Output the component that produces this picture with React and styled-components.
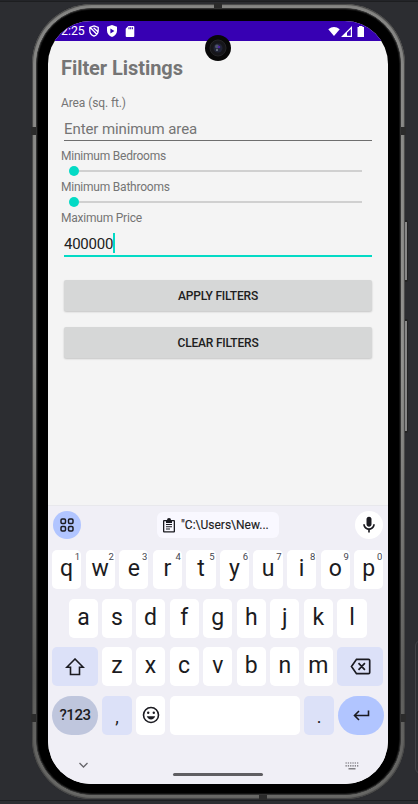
import React from "react";
import styled, { createGlobalStyle, css } from "styled-components";

const GlobalStyle = createGlobalStyle`
  * { box-sizing: border-box; }
  html, body { margin: 0; background: #2c2d31; }
  body { font-family: Roboto, "Noto Sans", sans-serif; overflow: hidden; }
`;

const Desktop = styled.main`
  position: relative;
  width: 418px;
  height: 804px;
  padding: 3px 0 0 32px;
  background: #2c2d31;
  border-top: 1px solid #232428;
  overflow: hidden;
`;

const DeskLine = styled.div`
  position: absolute;
  left: 0;
  right: 0;
  top: 799px;
  height: 1px;
  background: #1d1e20;
`;

const TopLine = styled(DeskLine)`
  top: 0;
`;

const SidePanel = styled.div`
  position: absolute;
  left: 415px;
  top: 639px;
  width: 20px;
  height: 134px;
  border: 1px solid #414246;
  border-radius: 6px;
`;

const SideButton = styled.div`
  position: absolute;
  left: 404px;
  top: ${(p) => p.$top}px;
  width: 4px;
  height: ${(p) => p.$height}px;
  border-radius: 2px;
  border: 1px solid #222;
  border-width: 2px 1px 2px 1px;
  background: #888;
`;

const Phone = styled.div`
  position: relative;
  width: 373px;
  height: 795px;
  border-radius: 60px;
  background: #222;
`;

const Rim = styled.div`
  height: 100%;
  padding: 4px;
  border-radius: 60px;
  background: linear-gradient(180deg, #858583 0%, #92928f 45%, #5e5e5c 85%, #686866 100%);
  box-shadow: inset 0 0 1px 1px #444;
`;

const Bezel = styled.div`
  height: 100%;
  padding: 12px 11px 10px 11px;
  border: 1px solid #333;
  border-radius: 56px;
  background: #000;
  box-shadow: inset 0 0 0 1px #111;
`;

const Antenna = styled.i`
  position: absolute;
  left: ${(p) => p.$x}px;
  top: ${(p) => p.$y}px;
  width: ${(p) => (p.$flat ? 8 : 5)}px;
  height: ${(p) => (p.$flat ? 5 : 8)}px;
  background: #2b2b2b;
`;

const Screen = styled.div`
  width: 340px;
  height: 763px;
  border-radius: 43px;
  background: #f4f4f4;
  overflow: hidden;
  display: flex;
  flex-direction: column;
`;

const StatusBar = styled.header`
  height: 20px;
  flex: none;
  padding: 0 23px 0 13px;
  background: #3700b3;
  color: #fff;
  display: flex;
  align-items: center;
  svg { display: block; }
`;

const Clock = styled.span`
  width: 28px;
  font-size: 12.3px;
  line-height: 20px;
`;

const StatusIcons = styled.div`
  display: flex;
  align-items: center;
  gap: ${(p) => p.$gap}px;
  margin-left: ${(p) => (p.$end ? "auto" : 0)};
`;

const Camera = styled.svg`
  position: absolute;
  left: 173px;
  top: 31px;
`;

const Form = styled.section`
  height: 464px;
  flex: none;
  padding: 13px 13px 0;
  display: flex;
  flex-direction: column;
`;

const Title = styled.h1`
  margin: 0 0 13px;
  font-size: 20px;
  line-height: 28px;
  font-weight: 700;
  letter-spacing: -0.06px;
  color: #757575;
`;

const Label = styled.label`
  height: 16px;
  font-size: 12px;
  line-height: 16px;
  color: #757575;
  letter-spacing: ${(p) => (p.$loose ? -0.1 : -0.22)}px;
`;

const Field = styled.div`
  height: ${(p) => (p.$active ? 31 : 30)}px;
  margin: 0 3px ${(p) => (p.$active ? 23 : 7)}px;
  padding-top: ${(p) => (p.$active ? 7 : 6)}px;
  border-bottom: ${(p) => (p.$active ? "2px solid #03dac5" : "1px solid #6e6e6e")};
  font-size: 15px;
  line-height: 22px;
  letter-spacing: ${(p) => (p.$active ? -0.25 : -0.09)}px;
  color: ${(p) => (p.$active ? "#202020" : "#757575")};
  display: flex;
  align-items: center;
`;

const Caret = styled.i`
  width: 2px;
  height: 20px;
  background: #03dac5;
  margin-top: -3px;
`;

const Slider = styled.div`
  height: 15px;
  padding: 0 13px 2px 8px;
  display: flex;
  align-items: center;
`;

const Thumb = styled.i`
  width: 10px;
  height: 10px;
  border-radius: 50%;
  background: #03dac5;
`;

const Track = styled.i`
  flex: 1;
  height: 2px;
  background: #d0d0d0;
`;

const FormButton = styled.button`
  height: 31px;
  flex: none;
  margin: 0 3px 16px;
  padding: ${(p) => (p.$low ? 1 : 0)}px 0 0;
  border: 0;
  border-radius: 2px;
  background: #d6d7d7;
  box-shadow: 0 1px 2px rgba(0, 0, 0, 0.2);
  color: #202020;
  font: 500 12px/30px Roboto, sans-serif;
  letter-spacing: -0.2px;
`;

const Keyboard = styled.section`
  height: 279px;
  flex: none;
  padding: 5px 4px 0;
  background: #f0eff6;
  border-top: 1px solid #e8e8ec;
  color: #1b1b21;
  display: flex;
  flex-direction: column;
  svg { display: block; }
`;

const Suggestions = styled.div`
  height: 28px;
  margin-bottom: 11px;
  display: flex;
  align-items: center;
  justify-content: space-between;
`;

const RoundButton = styled.button`
  width: 28px;
  height: 28px;
  padding: 0;
  border: 0;
  border-radius: 50%;
  margin: 0 1px;
  background: ${(p) => (p.$blue ? "#b1c5ff" : "#fff")};
  color: #1b1b21;
  display: grid;
  place-items: center;
`;

const Clip = styled.div`
  width: 122px;
  height: 26px;
  border-radius: 6px;
  background: #f9f8ff;
  padding-left: 5px;
  display: flex;
  align-items: center;
  gap: 5px;
  font-size: 12px;
  letter-spacing: 0;
  -webkit-text-stroke: 0.15px #1b1b21;
`;

const KeyRow = styled.div`
  height: 39px;
  margin-bottom: 9.6px;
  padding: 0 ${(p) => p.$inset || 0}px;
  display: flex;
  gap: 4.4px;
`;

const keyTone = {
  plain: "#fff",
  soft: "#dce1f8",
  mode: "#bfc6dd",
  enter: "#b1c5ff",
};

const Key = styled.button`
  position: relative;
  flex: ${(p) => (p.$wide ? "0 0 46px" : p.$grow ? "1 1 0" : "0 0 29.2px")};
  height: 39px;
  padding: 0 0 1px;
  border: 0;
  border-radius: ${(p) => (p.$round ? 20 : 5)}px;
  background: ${(p) => keyTone[p.$tone || "plain"]};
  color: #1b1b21;
  font: 400 23px/36px Roboto, sans-serif;
  display: flex;
  align-items: center;
  justify-content: center;
  ${(p) => p.$icon && css`padding: 0;`}
  ${(p) => p.$mode && css`font-size: 15px; font-weight: 500; letter-spacing: -0.5px; padding: 0;`}
  ${(p) => p.$punct && css`font-size: 18px; padding-top: 4px;`}
`;

const Hint = styled.sup`
  position: absolute;
  right: 1px;
  top: 2px;
  font-size: 9.5px;
  line-height: 10px;
  color: #45464f;
`;

const NavBar = styled.footer`
  flex: 1;
  padding: 18px 25px 0 27px;
  display: grid;
  grid-template-columns: 30px 1fr 30px;
  align-items: start;
`;

const HomePill = styled.i`
  justify-self: center;
  width: 90px;
  height: 3px;
  margin-top: 11px;
  margin-right: 2px;
  border-radius: 2px;
  background: #5f5e62;
`;

const NavIcon = styled.span`
  justify-self: ${(p) => p.$side};
  color: #66656a;
`;

function Glyph({ w = 18, h = w, box = "0 0 24 24", stroke, children }) {
  return (
    <svg
      width={w}
      height={h}
      viewBox={box}
      fill={stroke ? "none" : "currentColor"}
      stroke={stroke ? "currentColor" : "none"}
      strokeWidth={stroke}
    >
      {children}
    </svg>
  );
}

function Letters({ text, hints }) {
  return [...text].map((ch, i) => (
    <Key key={ch}>
      {ch}
      {hints && <Hint>{hints[i]}</Hint>}
    </Key>
  ));
}

function Status() {
  return (
    <StatusBar>
      <Clock>2:25</Clock>
      <StatusIcons $gap={8}>
        <Glyph w={10} h={12} box="0 0 10 12" stroke={1.3}>
          <path d="M5 .9 9.2 2.4v3.3c0 2.6-1.7 4.400-4.200 5.400C2.500 10.100.8 8.300.8 5.700V2.400zM1.300 2.500l6.500 6.800M4.600 2.800l4 3.600" />
        </Glyph>
        <Glyph w={10} h={12} box="0 0 10 12">
          <path fillRule="evenodd" d="M5 0 10 1.800v4C10 8.700 8 10.900 5 12 2 10.900 0 8.700 0 5.800v-4zM3.400 3.500v5L7.400 6z" />
        </Glyph>
        <Glyph w={10} h={11} box="0 0 10 11">
          <path fillRule="evenodd" d="M3.300 0H8.300Q9.300 0 9.300 1V10Q9.300 11 8.300 11H1.700Q.700 11 .700 10V2.700zM3.500 1.300v2h1v-2zM5.200 1.300v2h1v-2zM6.900 1.300v2h1v-2z" />
        </Glyph>
      </StatusIcons>
      <StatusIcons $gap={1} $end>
        <Glyph w={12} h={11} box="0 0 13 11">
          <path d="M.300 3Q6.500-2 12.700 3L6.500 10.500z" />
        </Glyph>
        <Glyph w={11} h={11} box="0 0 11 11">
          <path fillRule="evenodd" d="M0 11 11 0v11zM6 6.700V9.800h3.800V3z" />
        </Glyph>
        <Glyph w={12} h={11} box="1 0 12 11">
          <path d="M5.500 1H7V0h3.500v1H12v10H5.500z" />
        </Glyph>
      </StatusIcons>
    </StatusBar>
  );
}

export default function App() {
  return (
    <Desktop>
      <GlobalStyle />
      <TopLine />
      <DeskLine />
      <SidePanel />
      <SideButton $top={219} $height={62} />
      <SideButton $top={318} $height={114} />
      <Phone>
        <Rim>
          <Bezel>
            <Screen>
              <Status />
              <Form>
                <Title>Filter Listings</Title>
                <Label $loose>Area (sq. ft.)</Label>
                <Field>Enter minimum area</Field>
                <Label>Minimum Bedrooms</Label>
                <Slider><Thumb /><Track /></Slider>
                <Label>Minimum Bathrooms</Label>
                <Slider><Thumb /><Track /></Slider>
                <Label>Maximum Price</Label>
                <Field $active>400000<Caret /></Field>
                <FormButton $low>APPLY FILTERS</FormButton>
                <FormButton>CLEAR FILTERS</FormButton>
              </Form>
              <Keyboard>
                <Suggestions>
                  <RoundButton $blue>
                    <Glyph w={14} box="0 0 14 14" stroke={1.5}>
                      <rect x="1" y="1" width="4.500" height="4.500" rx="1.200" />
                      <rect x="8.500" y="1" width="4.500" height="4.500" rx="1.200" />
                      <rect x="1" y="8.500" width="4.500" height="4.500" rx="1.200" />
                      <rect x="8.500" y="8.500" width="4.500" height="4.500" rx="1.200" />
                    </Glyph>
                  </RoundButton>
                  <Clip>
                    <Glyph w={14} h={15} box="0 0 14 15">
                      <path fillRule="evenodd" d="M2 2h3a2 2 0 0 1 4 0h3q1 0 1 1v10.500q0 1-1 1H2q-1 0-1-1V3q0-1 1-1zm.300 1.300v9.900h9.400V3.300H10V5H4V3.300z" />
                      <path d="M4 6h6v1.100H4zM4 8.200h6v1.100H4zM4 10.400h4v1.100H4z" />
                    </Glyph>
                    <span>"C:\Users\New...</span>
                  </Clip>
                  <RoundButton>
                    <Glyph w={20}>
                      <path d="M12 14c1.660 0 3-1.340 3-3V5a3 3 0 0 0-6 0v6c0 1.660 1.340 3 3 3m5-3a5 5 0 0 1-10 0H5c0 3.530 2.610 6.430 6 6.920V21h2v-3.080c3.390-.490 6-3.390 6-6.920z" />
                    </Glyph>
                  </RoundButton>
                </Suggestions>
                <KeyRow><Letters text="qwertyuiop" hints="1234567890" /></KeyRow>
                <KeyRow $inset={16.8}><Letters text="asdfghjkl" /></KeyRow>
                <KeyRow>
                  <Key $wide $icon $tone="soft">
                    <Glyph w={20} h={18} box="0 0 20 18" stroke={1.600}>
                      <path d="M10 1 1.800 9.300H5.500V16.500H14.500V9.300H18.200z" />
                    </Glyph>
                  </Key>
                  <Letters text="zxcvbnm" />
                  <Key $wide $icon $tone="soft">
                    <Glyph w={21} h={17} box="0 0 21 17" stroke={1.700}>
                      <path d="M6.500 1.300H18.500Q19.700 1.300 19.700 2.500V14.500Q19.700 15.700 18.500 15.700H6.500L1.500 8.500zM8.500 5.200l6.400 6.600M14.900 5.200l-6.400 6.600" />
                    </Glyph>
                  </Key>
                </KeyRow>
                <KeyRow>
                  <Key $wide $round $mode $tone="mode">?123</Key>
                  <Key $tone="soft" $punct>,</Key>
                  <Key $icon>
                    <Glyph w={18} box="0 0 18 18">
                      <circle cx="9" cy="9" r="7.500" fill="none" stroke="currentColor" strokeWidth="1.600" />
                      <circle cx="6.200" cy="6.800" r="1.200" />
                      <circle cx="11.800" cy="6.800" r="1.200" />
                      <path d="M4.800 10.300h8.400c-.6 2-2.200 3.200-4.200 3.200s-3.600-1.200-4.200-3.200" />
                    </Glyph>
                  </Key>
                  <Key $grow aria-label="space" />
                  <Key $tone="soft" $punct>.</Key>
                  <Key $wide $round $icon $tone="enter">
                    <Glyph w={17} h={12} box="0 0 17 12" stroke={1.600}>
                      <path d="M15.500 1.500V6.500H1.700M6 2 1.500 6.500 6 11" />
                    </Glyph>
                  </Key>
                </KeyRow>
                <NavBar>
                  <NavIcon $side="start">
                    <Glyph w={9} h={6} box="0 0 9 6" stroke={1.300}>
                      <path d="M.500 1 4.500 5 8.500 1" />
                    </Glyph>
                  </NavIcon>
                  <HomePill />
                  <NavIcon $side="end">
                    <Glyph w={14} h={8} box="0 0 14 8" stroke={1.200}>
                      <path strokeDasharray="1.300 1" d="M.500 1H13.500M.500 3.800H13.500" />
                      <path d="M3.500 6.800H10.500" />
                    </Glyph>
                  </NavIcon>
                </NavBar>
              </Keyboard>
            </Screen>
          </Bezel>
        </Rim>
        <Antenna $x={-1} $y={123} />
        <Antenna $x={369} $y={123} />
        <Antenna $x={-1} $y={710} />
        <Antenna $x={369} $y={710} />
        <Antenna $x={182} $y={-1} $flat />
        <Antenna $x={227} $y={791} $flat />
        <Camera width="26" height="26" viewBox="0 0 26 26">
          <circle cx="13" cy="13" r="13" fill="#080808" />
          <circle cx="13" cy="13" r="8" fill="#16161a" stroke="#242427" />
          <circle cx="13" cy="13" r="4.500" fill="#202436" />
          <circle cx="12" cy="11.500" r="2" fill="#4d5269" />
          <circle cx="14" cy="12" r="1.300" fill="#4a22a0" />
          <circle cx="12" cy="15" r="1" fill="#77808c" />
        </Camera>
      </Phone>
    </Desktop>
  );
}
